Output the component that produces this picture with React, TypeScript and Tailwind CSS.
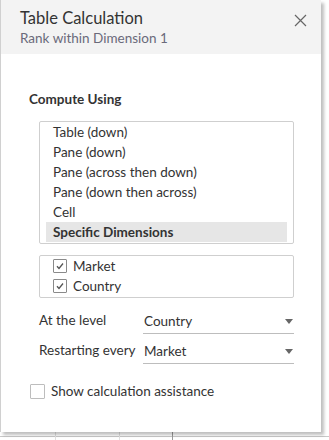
import React from "react";

const Check = () => (
  <span className="w-[14px] h-[14px] border border-[#8a8a8a] rounded-[1px] bg-white flex items-center justify-center">
    <svg width="10" height="10" viewBox="0 0 10 10">
      <path d="M2 5.2 L4 7.5 L8 2.5" fill="none" stroke="#555" strokeWidth="1.3" />
    </svg>
  </span>
);

const Arrow = () => (
  <svg width="8" height="5" viewBox="0 0 8 5">
    <path d="M0 0 H8 L4 5 Z" fill="#666" />
  </svg>
);

export default function App() {
  const items = ["Table (down)", "Pane (down)", "Pane (across then down)", "Pane (down then across)", "Cell"];
  return (
    <div className="w-[329px] h-[440px] bg-white relative overflow-hidden text-[#333]" style={{ fontFamily: "Lato, 'Liberation Sans', sans-serif" }}>
      <div className="absolute left-0 top-[436px] w-[329px] h-[1px] bg-[#c8c8c8]" />
      <div className="absolute left-[55px] top-[432px] w-[1px] h-[8px] bg-[#e0e0e0]" />
      <div className="absolute left-[119px] top-[432px] w-[1px] h-[8px] bg-[#e0e0e0]" />
      <div className="absolute left-[172px] top-[432px] w-[1px] h-[8px] bg-[#999]" />
      <div className="absolute left-0 top-0 w-[321px] h-[432px] bg-white border-l border-[#d0d0d0] shadow-[3px_3px_3px_rgba(0,0,0,0.25)] flex flex-col">
        <div className="h-[54px] bg-[#f3f3f3] flex justify-between pl-[19px] pr-[14px] pt-[7px]">
          <div className="flex flex-col">
            <div className="text-[16.5px] leading-[22px] text-[#333]">Table Calculation</div>
            <div className="text-[13.5px] leading-[18px] text-[#6a6a7a]">Rank within Dimension 1</div>
          </div>
          <svg width="13" height="13" viewBox="0 0 13 13" className="mt-[7px]">
            <path d="M1 1 L12 12 M12 1 L1 12" stroke="#666" strokeWidth="1.2" />
          </svg>
        </div>
        <div className="pl-[28px] pt-[36px] text-[13.5px] font-bold leading-[18px]">Compute Using</div>
        <div className="ml-[38px] mt-[13px] w-[255px] h-[123px] border border-[#cfcfcf] rounded-[2px] px-[6px] pt-0 flex flex-col">
          {items.map((t) => (
            <div key={t} className="h-[20px] leading-[20px] text-[13.5px] pl-[7px]">{t}</div>
          ))}
          <div className="h-[20px] leading-[20px] text-[13.5px] pl-[7px] font-bold bg-[#e6e6e6]">Specific Dimensions</div>
        </div>
        <div className="ml-[38px] mt-[11px] w-[255px] h-[43px] border border-[#cfcfcf] rounded-[2px] pl-[13px] pt-0 flex flex-col">
          {["Market", "Country"].map((t) => (
            <div key={t} className="h-[20px] flex items-center gap-[6px] text-[13.5px]">
              <Check />
              <span>{t}</span>
            </div>
          ))}
        </div>
        <div className="ml-[38px] mt-[12px] flex items-end h-[24px] text-[13.5px]">
          <span className="w-[104px] pb-[4px]">At the level</span>
          <div className="w-[151px] h-[24px] border-b border-[#bdbdbd] flex items-center justify-between pl-[1px] pr-[1px]">
            <span>Country</span>
            <Arrow />
          </div>
        </div>
        <div className="ml-[38px] mt-[6px] flex items-end h-[24px] text-[13.5px]">
          <span className="w-[104px] pb-[4px]">Restarting every</span>
          <div className="w-[151px] h-[24px] border-b border-[#bdbdbd] flex items-center justify-between pl-[1px] pr-[1px]">
            <span>Market</span>
            <Arrow />
          </div>
        </div>
        <div className="ml-[29px] mt-[17px] flex items-center gap-[6px] text-[13.5px]">
          <span className="w-[15px] h-[15px] border border-[#bdbdbd] rounded-[1px] bg-white" />
          <span>Show calculation assistance</span>
        </div>
      </div>
    </div>
  );
}
